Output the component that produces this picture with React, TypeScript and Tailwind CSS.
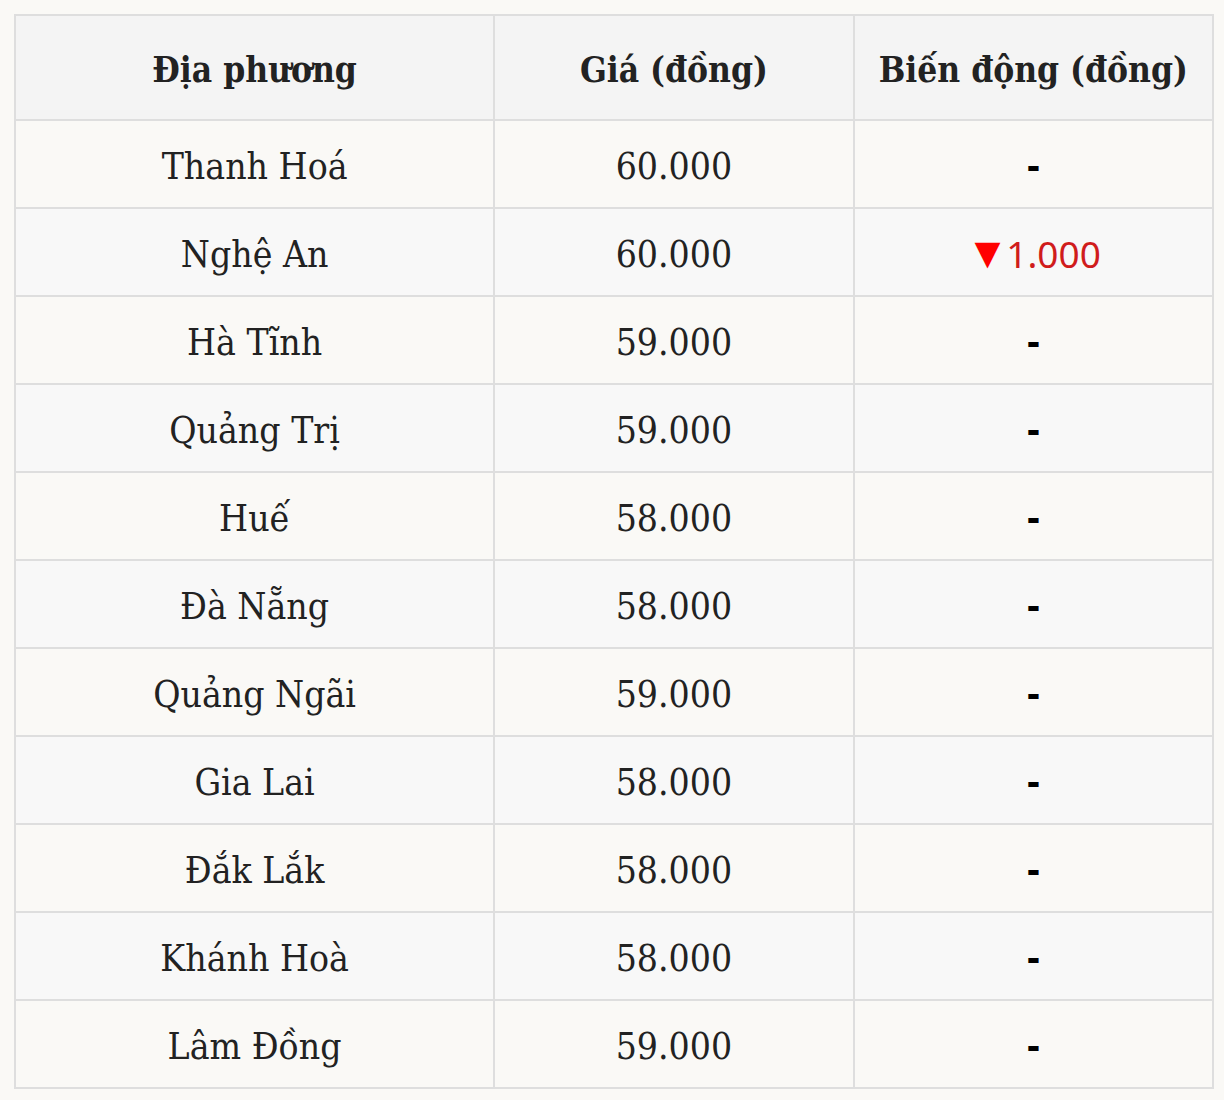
const rows: { name: string; price: string; change: string | null }[] = [
  { name: "Thanh Hoá", price: "60.000", change: null },
  { name: "Nghệ An", price: "60.000", change: "1.000" },
  { name: "Hà Tĩnh", price: "59.000", change: null },
  { name: "Quảng Trị", price: "59.000", change: null },
  { name: "Huế", price: "58.000", change: null },
  { name: "Đà Nẵng", price: "58.000", change: null },
  { name: "Quảng Ngãi", price: "59.000", change: null },
  { name: "Gia Lai", price: "58.000", change: null },
  { name: "Đắk Lắk", price: "58.000", change: null },
  { name: "Khánh Hoà", price: "58.000", change: null },
  { name: "Lâm Đồng", price: "59.000", change: null },
];

export default function App() {
  return (
    <div className="min-h-[1100px] bg-[#faf9f6] pt-[14px] pl-[14px] font-['DejaVu_Serif_Condensed','DejaVu_Serif',serif] text-[#222]">
      <table className="w-[1200px] border-collapse border-2 border-[#dedede] table-fixed">
        <colgroup>
          <col className="w-[40%]" />
          <col className="w-[30%]" />
          <col className="w-[30%]" />
        </colgroup>
        <thead>
          <tr className="h-[105px] bg-[#f4f4f4]">
            <th className="border-2 border-[#dedede] pt-[6px] text-center text-[35px] font-bold">Địa phương</th>
            <th className="border-2 border-[#dedede] pt-[6px] text-center text-[35px] font-bold">Giá (đồng)</th>
            <th className="border-2 border-[#dedede] pt-[6px] text-center text-[35px] font-bold">Biến động (đồng)</th>
          </tr>
        </thead>
        <tbody>
          {rows.map((r, i) => (
            <tr key={r.name} className={i % 2 === 0 ? "h-[88px] bg-[#faf9f6]" : "h-[88px] bg-[#f8f8f8]"}>
              <td className="border-2 border-[#dedede] pt-[6px] text-center text-[37px]">{r.name}</td>
              <td className="border-2 border-[#dedede] pt-[6px] text-center text-[37px]">{r.price}</td>
              <td className="border-2 border-[#dedede] pt-[6px] text-center text-[37px]">
                {r.change ? (
                  <span className="font-['Noto_Sans',sans-serif] text-[#d01c1c]">
                    <span className="text-[#ff0000] text-[44px] leading-none -mr-[3px]">▼</span>
                    {r.change}
                  </span>
                ) : (
                  <span className="font-bold text-black">-</span>
                )}
              </td>
            </tr>
          ))}
        </tbody>
      </table>
    </div>
  );
}
